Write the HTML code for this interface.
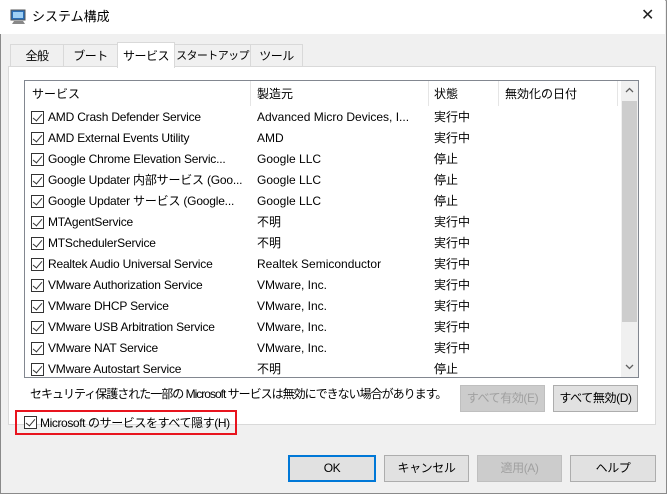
<!DOCTYPE html>
<html><head><meta charset="utf-8"><style>
*{box-sizing:border-box;margin:0;padding:0}
body{width:667px;height:494px;background:#f0f0f0;font-family:"Liberation Sans","Noto Sans CJK JP",sans-serif;font-size:12px;line-height:16px;color:#000;position:relative;overflow:hidden}
.win{position:absolute;left:0;top:0;width:667px;height:494px;border:1px solid #8a8a8a;border-top-color:#aaa}
.title{position:absolute;left:0;top:0;width:665px;height:34px;background:#fff}
.title span{position:absolute;left:32px;top:9px;font-size:13px}
.x{position:absolute;left:641px;top:8px;font-size:16px;font-weight:300;color:#222}
.a{position:absolute;white-space:nowrap;line-height:16px}
.tab{position:absolute;top:44px;height:22px;border:1px solid #d9d9d9;border-bottom:none;background:#f0f0f0;padding-top:3px;text-align:center;white-space:nowrap;letter-spacing:-0.5px}
.tab.sel{top:42px;height:26px;background:#fff;z-index:2;padding-top:5px}
.panel{position:absolute;left:8px;top:66px;width:648px;height:359px;background:#fff;border:1px solid #d9d9d9}
.list{position:absolute;left:24px;top:80px;width:615px;height:298px;border:1px solid #828790;background:#fff}
.sep{position:absolute;top:0;height:25px;width:1px;background:#e5e5e5}
.cb{position:absolute;width:13px;height:13px;border:1px solid #333;background:#fff}
.cb:after{content:"";position:absolute;left:3px;top:0px;width:4px;height:8px;border:solid #333;border-width:0 1.3px 1.3px 0;transform:rotate(40deg)}
.btn{position:absolute;height:27px;border:1px solid #adadad;background:#e1e1e1;text-align:center;line-height:25px;white-space:nowrap;letter-spacing:-0.4px}
.dis{color:#a0a0a0;border-color:#bfbfbf;background:#cccccc}
</style></head><body>
<div class="win"></div>
<div class="title">
<svg style="position:absolute;left:10px;top:9px" width="17" height="16" viewBox="0 0 17 16"><rect x="1" y="1" width="14" height="10" fill="#2a6fb8" stroke="#555"/><rect x="3" y="3" width="10" height="6" fill="#9fd0f5"/><path d="M4 12h9l2 3H2z" fill="#888"/></svg>
<span>システム構成</span><div class="x">✕</div></div>
<div class="panel"></div>
<div class="tab" style="left:10px;width:54px">全般</div>
<div class="tab" style="left:63px;width:55px">ブート</div>
<div class="tab sel" style="left:117px;width:58px">サービス</div>
<div class="tab" style="left:174px;width:77px;font-size:11px;letter-spacing:-0.6px">スタートアップ</div>
<div class="tab" style="left:250px;width:53px">ツール</div>
<div class="list">
<div class="sep" style="left:225px"></div><div class="sep" style="left:403px"></div><div class="sep" style="left:473px"></div><div class="sep" style="left:592px"></div>
<div class="a" style="left:7px;top:5px">サービス</div>
<div class="a" style="left:232px;top:5px">製造元</div>
<div class="a" style="left:409px;top:5px">状態</div>
<div class="a" style="left:480px;top:5px">無効化の日付</div>
<div style="position:absolute;left:596px;top:0;width:17px;height:296px;background:#f0f0f0"></div>
<div style="position:absolute;left:597px;top:20px;width:15px;height:221px;background:#cdcdcd"></div>
<svg style="position:absolute;left:600px;top:6px" width="9" height="6"><path d="M1 5l3.5-3.5L8 5" fill="none" stroke="#606060" stroke-width="1.3"/></svg>
<svg style="position:absolute;left:600px;top:283px" width="9" height="6"><path d="M1 1l3.5 3.5L8 1" fill="none" stroke="#606060" stroke-width="1.3"/></svg>
</div>
<div id="rows"></div>
<div class="a" style="left:30px;top:386px;letter-spacing:-1px">セキュリティ保護された一部の Microsoft サービスは無効にできない場合があります。</div>
<div class="btn dis" style="left:460px;top:385px;width:85px">すべて有効(E)</div>
<div class="btn" style="left:553px;top:385px;width:85px">すべて無効(D)</div>
<div style="position:absolute;left:15px;top:410px;width:222px;height:25px;border:2px solid #e8141e"></div>
<div class="cb" style="left:24px;top:416px"></div>
<div class="a" style="left:40px;top:415px;letter-spacing:-0.4px">Microsoft のサービスをすべて隠す(H)</div>
<div class="btn" style="left:288px;top:455px;width:88px;border:2px solid #0078d7;line-height:23px">OK</div>
<div class="btn" style="left:384px;top:455px;width:85px">キャンセル</div>
<div class="btn dis" style="left:477px;top:455px;width:85px">適用(A)</div>
<div class="btn" style="left:570px;top:455px;width:86px">ヘルプ</div>
<script>
var d=[["AMD Crash Defender Service","Advanced Micro Devices, I...","実行中"],["AMD External Events Utility","AMD","実行中"],["Google Chrome Elevation Servic...","Google LLC","停止"],["Google Updater 内部サービス (Goo...","Google LLC","停止"],["Google Updater サービス (Google...","Google LLC","停止"],["MTAgentService","不明","実行中"],["MTSchedulerService","不明","実行中"],["Realtek Audio Universal Service","Realtek Semiconductor","実行中"],["VMware Authorization Service","VMware, Inc.","実行中"],["VMware DHCP Service","VMware, Inc.","実行中"],["VMware USB Arbitration Service","VMware, Inc.","実行中"],["VMware NAT Service","VMware, Inc.","実行中"],["VMware Autostart Service","不明","停止"]];
var h="";d.forEach(function(r,i){var y=109+i*21;h+='<div class="cb" style="left:31px;top:'+(y+2)+'px"></div><div class="a" style="left:48px;top:'+y+'px;letter-spacing:-0.2px">'+r[0]+'</div><div class="a" style="left:257px;top:'+y+'px">'+r[1]+'</div><div class="a" style="left:434px;top:'+y+'px">'+r[2]+'</div>';});
document.getElementById("rows").innerHTML=h;
</script>
</body></html>
